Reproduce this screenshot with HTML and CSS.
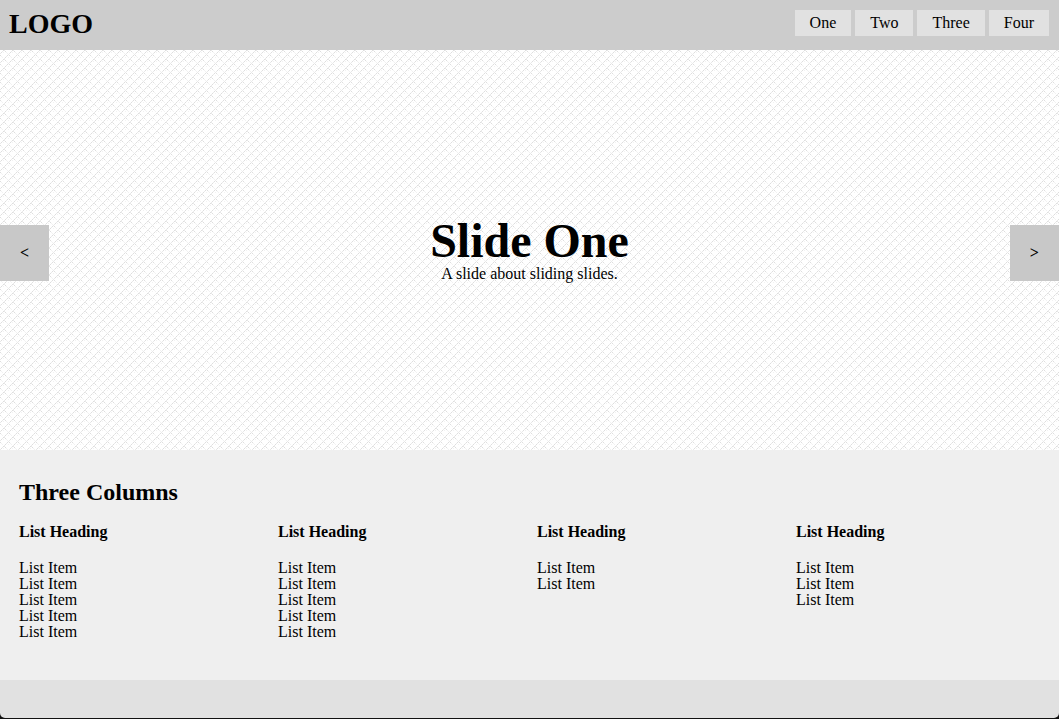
FILE: index.html
```html
<!DOCTYPE html>
<html lang="en">
<head>
<meta charset="utf-8">
<meta name="viewport" content="width=device-width, initial-scale=1">
<title>Slide One</title>
<link rel="stylesheet" href="styles.css">
</head>
<body>
<header class="header">
  <h1 class="logo">LOGO</h1>
  <nav class="nav">
    <a href="#one">One</a>
    <a href="#two">Two</a>
    <a href="#three">Three</a>
    <a href="#four">Four</a>
  </nav>
</header>
<main>
  <section class="slider">
    <svg class="texture" aria-hidden="true" shape-rendering="crispEdges">
      <defs>
        <pattern id="weave" width="9" height="9" patternUnits="userSpaceOnUse">
          <path fill="#dedede" d="M1 2h1v1h-1zM3 0h1v1h-1zM5 1h1v1h-1zM5 7h1v1h-1zM7 5h1v1h-1zM0 5h1v1h-1z"/>
          <path fill="#e9e9e9" d="M0 3h1v1h-1zM2 1h1v1h-1zM4 0h1v1h-1zM4 8h1v1h-1zM6 6h1v1h-1zM8 4h1v1h-1z"/>
          <path fill="#f2f2f2" d="M6 2h1v1h-1zM7 3h1v1h-1zM1 6h1v1h-1zM2 7h1v1h-1zM3 2h1v1h-1zM8 7h1v1h-1z"/>
        </pattern>
      </defs>
      <rect width="100%" height="100%" fill="url(#weave)"/>
    </svg>
    <button class="arrow" type="button" aria-label="Previous slide">&lt;</button>
    <div class="slide">
      <h2 class="slide-title">Slide One</h2>
      <p class="slide-text">A slide about sliding slides.</p>
    </div>
    <button class="arrow" type="button" aria-label="Next slide">&gt;</button>
  </section>
  <section class="columns">
    <h2 class="columns-title">Three Columns</h2>
    <div class="grid">
      <div>
        <h3 class="list-title">List Heading</h3>
        <ul class="list"><li>List Item</li><li>List Item</li><li>List Item</li><li>List Item</li><li>List Item</li></ul>
      </div>
      <div>
        <h3 class="list-title">List Heading</h3>
        <ul class="list"><li>List Item</li><li>List Item</li><li>List Item</li><li>List Item</li><li>List Item</li></ul>
      </div>
      <div>
        <h3 class="list-title">List Heading</h3>
        <ul class="list"><li>List Item</li><li>List Item</li></ul>
      </div>
      <div>
        <h3 class="list-title">List Heading</h3>
        <ul class="list"><li>List Item</li><li>List Item</li><li>List Item</li></ul>
      </div>
    </div>
  </section>
</main>
<footer class="footer"></footer>
</body>
</html>
```
FILE: styles.css
```css
* {
  box-sizing: border-box;
  margin: 0;
  padding: 0;
}

html {
  background: #111;
}

body {
  display: flex;
  flex-direction: column;
  min-height: 100vh;
  padding-bottom: 1px;
  font: 16px/16px "Liberation Serif", "Times New Roman", serif;
  color: #000;
}

main {
  display: flex;
  flex-direction: column;
}

.header {
  display: flex;
  justify-content: space-between;
  align-items: flex-start;
  min-height: 50px;
  padding: 10px 10px 10px 9px;
  background: #ccc;
}

.logo {
  font-size: 28px;
  line-height: 28px;
}

.nav {
  display: flex;
  gap: 4px;
}

.nav a {
  padding: 5px 15px;
  background: #e1e1e1;
  color: inherit;
  text-decoration: none;
}

.slider {
  position: relative;
  display: flex;
  align-items: center;
  justify-content: space-between;
  min-height: 400px;
  padding-top: 6px;
  background: #fff;
}

.texture {
  position: absolute;
  inset: 0;
  width: 100%;
  height: 100%;
}

.arrow {
  position: relative;
  padding: 20px;
  border: 0;
  background: #c8c8c8;
  color: inherit;
  font: inherit;
  font-weight: bold;
}

.slide {
  position: relative;
  padding-bottom: 8px;
  text-align: center;
}

.slide-title {
  font-size: 48px;
  line-height: 50px;
}

.columns {
  padding: 30px 19px 40px;
  background: #efefef;
}

.columns-title {
  margin-bottom: 20px;
  font-size: 24px;
  line-height: 24px;
}

.grid {
  display: grid;
  grid-template-columns: repeat(4, 1fr);
  gap: 15px;
}

.list-title {
  margin-bottom: 20px;
  font-size: 16px;
  line-height: 16px;
}

.list {
  list-style: none;
}

.footer {
  flex: 1;
  min-height: 38px;
  border-radius: 0 0 5px 5px;
  background: #e1e1e1;
}
```
